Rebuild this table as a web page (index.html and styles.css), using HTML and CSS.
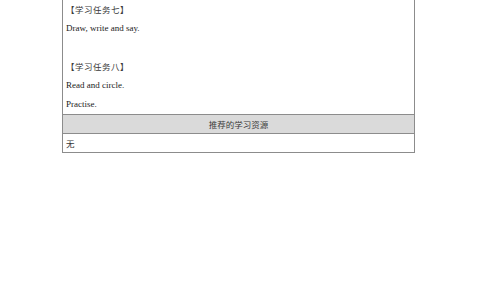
FILE: index.html
```html
<!DOCTYPE html>
<html lang="zh-CN">
<head>
	<meta charset="UTF-8">
	<title>学习任务</title>
	<link rel="stylesheet" href="styles.css">
</head>
<body>
	<div class="sheet">
		<div class="cell tasks">
			<p class="cn">【学习任务七】</p>
			<p>Draw, write and say.</p>
			<p class="blank"></p>
			<p class="cn">【学习任务八】</p>
			<p>Read and circle.</p>
			<p>Practise.</p>
		</div>
		<div class="cell head">推荐的学习资源</div>
		<div class="cell res cn">无</div>
	</div>
</body>
</html>
```

FILE: styles.css
```css
*{
	margin:0;
	padding:0;
}
body{
	background:#fff;
	font-family:"Liberation Serif","Noto Sans CJK SC",serif;
	font-size:9px;
	color:#222;
}
.sheet{
	width:351px;
	margin-left:62px;
	border:1px solid #8c8c8c;
	border-top:none;
}
.cell{
	padding:0 3px;
}
.tasks p{
	height:19px;
	line-height:19px;
}
.cn{
	font-family:"Noto Sans CJK SC",sans-serif;
	font-size:8.5px;
	color:#3a3a3a;
}
.tasks .cn{
	letter-spacing:0.5px;
}
.head{
	height:18px;
	line-height:18px;
	background:#dadada;
	border-top:1px solid #8c8c8c;
	border-bottom:1px solid #8c8c8c;
	text-align:center;
	font-family:"Noto Sans CJK SC",sans-serif;
	font-size:8.5px;
	color:#3a3a3a;
}
.res{
	height:18px;
	line-height:18px;
}
```
